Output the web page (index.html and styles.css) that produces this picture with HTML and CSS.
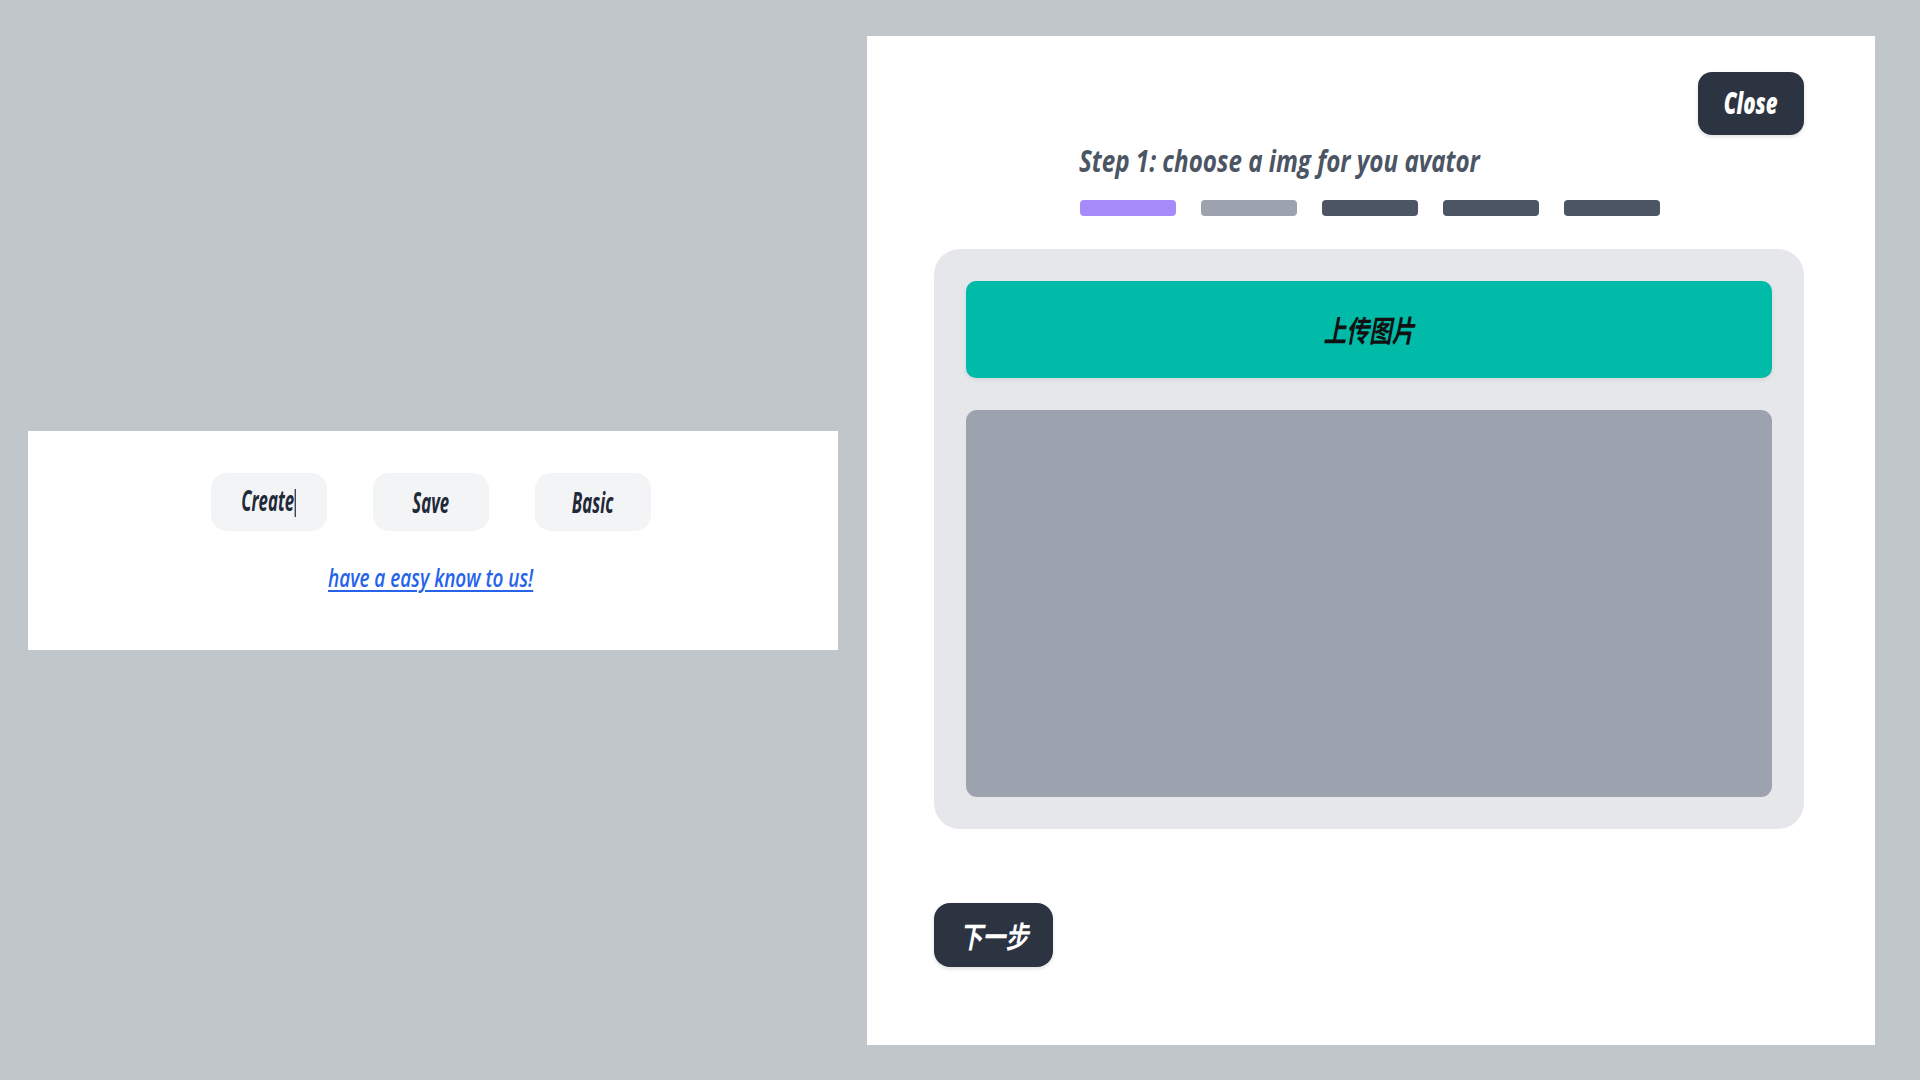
FILE: index.html
```html
<!DOCTYPE html>
<html lang="zh-CN">
<head>
<meta charset="utf-8">
<title>Avatar steps</title>
<link rel="stylesheet" href="styles.css">
</head>
<body>
  <main class="stage">
    <section class="card-left">
      <div class="btn-row">
        <button class="soft-btn"><span class="sq sq-btn">Create<span class="caret"></span></span></button>
        <button class="soft-btn"><span class="sq sq-btn">Save</span></button>
        <button class="soft-btn"><span class="sq sq-btn">Basic</span></button>
      </div>
      <a class="know-link" href="#"><span class="sq sq-link">have a easy know to us!</span></a>
    </section>

    <section class="card-right">
      <div class="top-row">
        <button class="dark-btn close-btn"><span class="sq sq-close">Close</span></button>
      </div>
      <div class="step-head">
        <h2 class="step-title"><span class="sq sq-title">Step 1: choose a img for you avator</span></h2>
        <div class="bars">
          <span class="bar bar-active"></span>
          <span class="bar bar-light"></span>
          <span class="bar bar-dark"></span>
          <span class="bar bar-dark"></span>
          <span class="bar bar-dark"></span>
        </div>
      </div>
      <div class="upload-box">
        <button class="upload-btn"><span class="sq sq-cjk">上传图片</span></button>
        <div class="preview"></div>
      </div>
      <button class="dark-btn next-btn"><span class="sq sq-cjk2">下一步</span></button>
    </section>
  </main>
</body>
</html>
```
FILE: styles.css
```css
* { box-sizing: border-box; }

html, body {
  margin: 0;
  padding: 0;
}

body {
  background: #c1c6ca;
  font-family: "Open Sans", "Noto Sans CJK SC", sans-serif;
  font-style: italic;
}

.stage {
  height: 1080px;
  display: flex;
  align-items: center;
  padding-left: 28px;
  gap: 29px;
}

.sq {
  display: inline-block;
  white-space: nowrap;
  transform-origin: center center;
}

/* left card */
.card-left {
  width: 810px;
  height: 219px;
  background: #ffffff;
  display: flex;
  flex-direction: column;
  align-items: center;
  padding-top: 42px;
}

.btn-row {
  display: flex;
  gap: 46px;
  margin-left: -5px;
}

.soft-btn {
  width: 116px;
  height: 58px;
  border: none;
  border-radius: 16px;
  background: #f3f4f6;
  color: #1f2937;
  font-family: "Open Sans", sans-serif;
  font-style: italic;
  font-weight: 700;
  font-size: 28px;
  line-height: 1;
  display: flex;
  align-items: center;
  justify-content: center;
  padding: 0;
}

.sq-btn { transform: scaleX(0.6); }

.caret {
  display: inline-block;
  width: 2px;
  height: 28px;
  background: #1f2937;
  vertical-align: -6px;
  margin-left: 1px;
}

.know-link {
  margin-top: 28px;
  font-size: 26px;
  line-height: 36px;
  font-weight: 600;
  color: #2563eb;
  text-decoration: underline;
  text-underline-offset: 3px;
  margin-left: -4px;
}

.sq-link { transform: scaleX(0.73); text-decoration: underline; text-decoration-thickness: 2px; }

/* right card */
.card-right {
  width: 1008px;
  height: 1009px;
  background: #ffffff;
  padding: 36px 71px 0 67px;
  display: flex;
  flex-direction: column;
}

.top-row {
  display: flex;
  justify-content: flex-end;
}

.dark-btn {
  border: none;
  background: #2d3441;
  color: #ffffff;
  display: flex;
  align-items: center;
  justify-content: center;
  padding: 0;
  box-shadow: 0 2px 4px rgba(0, 0, 0, 0.12);
}

.close-btn {
  width: 106px;
  height: 63px;
  border-radius: 14px;
  font-family: "Open Sans", sans-serif;
  font-style: italic;
  font-weight: 800;
  font-size: 30px;
  line-height: 1;
}

.sq-close { transform: scaleX(0.68); }

.step-head {
  margin-left: 145px;
  margin-top: 5px;
}

.step-title {
  margin: 0;
  font-size: 31px;
  line-height: 40px;
  font-weight: 700;
  font-style: italic;
  color: #4b5563;
}

.sq-title { transform: scaleX(0.78); transform-origin: left center; }

.bars {
  display: flex;
  gap: 25px;
  margin-top: 20px;
  margin-left: 1px;
}

.bar {
  width: 96px;
  height: 16px;
  border-radius: 4px;
}

.bar-active { background: #a78bfa; }
.bar-light { background: #9ca3af; }
.bar-dark { background: #4b5563; }

.upload-box {
  margin-top: 33px;
  background: #e5e7eb;
  border-radius: 26px;
  padding: 32px;
  height: 580px;
  display: flex;
  flex-direction: column;
  gap: 32px;
}

.upload-btn {
  height: 97px;
  width: 100%;
  border: none;
  border-radius: 10px;
  background: #00bba8;
  color: #111111;
  font-family: "Noto Sans CJK SC", sans-serif;
  font-style: italic;
  font-weight: 700;
  font-size: 30px;
  line-height: 1;
  display: flex;
  align-items: center;
  justify-content: center;
  box-shadow: 0 2px 4px rgba(0, 0, 0, 0.08);
}

.sq-cjk { transform: scaleX(0.76); }

.preview {
  flex: 1;
  background: #9ca3af;
  border-radius: 11px;
}

.next-btn {
  margin-top: 74px;
  width: 119px;
  height: 64px;
  border-radius: 16px;
  font-family: "Noto Sans CJK SC", sans-serif;
  font-style: italic;
  font-weight: 700;
  font-size: 30px;
  line-height: 1;
}

.sq-cjk2 { transform: scaleX(0.76); }
```
